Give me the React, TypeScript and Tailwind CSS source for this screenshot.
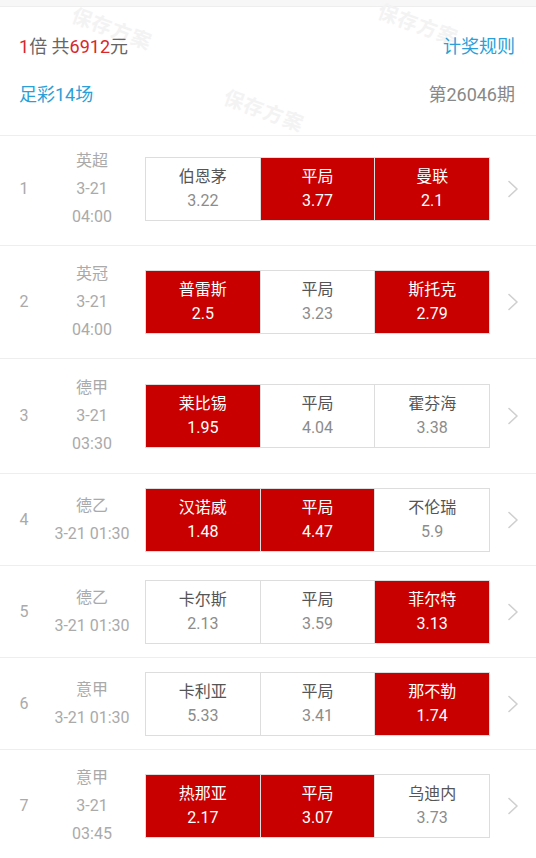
import React from "react";

type Pick = { name: string; odds: string; on: boolean };
type Match = {
  no: number;
  league: string;
  time: string[];
  h: string;
  picks: Pick[];
};

const matches: Match[] = [
  {
    no: 1,
    league: "英超",
    time: ["3-21", "04:00"],
    h: "h-[110px] pb-[3px]",
    picks: [
      { name: "伯恩茅", odds: "3.22", on: false },
      { name: "平局", odds: "3.77", on: true },
      { name: "曼联", odds: "2.1", on: true },
    ],
  },
  {
    no: 2,
    league: "英冠",
    time: ["3-21", "04:00"],
    h: "h-[113px]",
    picks: [
      { name: "普雷斯", odds: "2.5", on: true },
      { name: "平局", odds: "3.23", on: false },
      { name: "斯托克", odds: "2.79", on: true },
    ],
  },
  {
    no: 3,
    league: "德甲",
    time: ["3-21", "03:30"],
    h: "h-[115px]",
    picks: [
      { name: "莱比锡", odds: "1.95", on: true },
      { name: "平局", odds: "4.04", on: false },
      { name: "霍芬海", odds: "3.38", on: false },
    ],
  },
  {
    no: 4,
    league: "德乙",
    time: ["3-21 01:30"],
    h: "h-[92px]",
    picks: [
      { name: "汉诺威", odds: "1.48", on: true },
      { name: "平局", odds: "4.47", on: true },
      { name: "不伦瑞", odds: "5.9", on: false },
    ],
  },
  {
    no: 5,
    league: "德乙",
    time: ["3-21 01:30"],
    h: "h-[92px]",
    picks: [
      { name: "卡尔斯", odds: "2.13", on: false },
      { name: "平局", odds: "3.59", on: false },
      { name: "菲尔特", odds: "3.13", on: true },
    ],
  },
  {
    no: 6,
    league: "意甲",
    time: ["3-21 01:30"],
    h: "h-[92px]",
    picks: [
      { name: "卡利亚", odds: "5.33", on: false },
      { name: "平局", odds: "3.41", on: false },
      { name: "那不勒", odds: "1.74", on: true },
    ],
  },
  {
    no: 7,
    league: "意甲",
    time: ["3-21", "03:45"],
    h: "h-[113px]",
    picks: [
      { name: "热那亚", odds: "2.17", on: true },
      { name: "平局", odds: "3.07", on: true },
      { name: "乌迪内", odds: "3.73", on: false },
    ],
  },
];

function Chevron() {
  return (
    <svg width="12" height="18" viewBox="0 0 12 18" fill="none">
      <path d="M2 1.5 L10 9 L2 16.5" stroke="#cfcfcf" strokeWidth="1.6" strokeLinecap="round" strokeLinejoin="round" />
    </svg>
  );
}

// faint rotated "保存方案" stamps behind the header
function Watermark({ className }: { className: string }) {
  return (
    <span
      className={`pointer-events-none absolute rotate-[20deg] text-[20px] font-bold tracking-[1px] text-[#f3f3f3] ${className}`}
    >
      保存方案
    </span>
  );
}

function Row({ m }: { m: Match }) {
  return (
    <div className={`flex items-center border-b border-[#eeeeee] ${m.h}`}>
      <div className="w-[48px] text-center text-[16px] text-[#aaaaaa]">{m.no}</div>
      <div className="flex w-[88px] flex-col items-center text-[16px] leading-[28px] text-[#aaaaaa]">
        <span>{m.league}</span>
        {m.time.map((t) => (
          <span key={t} className="whitespace-nowrap">
            {t}
          </span>
        ))}
      </div>
      <div className="ml-[9px] flex h-[64px] w-[345px] divide-x divide-[#dddddd] border border-[#dddddd]">
        {m.picks.map((p, i) => (
          <div
            key={i}
            className={`flex flex-1 flex-col items-center justify-center text-[16px] leading-[24px] ${
              p.on ? "bg-[#c80000] text-white" : "bg-white"
            }`}
          >
            <span className={p.on ? "" : "text-[#555555]"}>{p.name}</span>
            <span className={p.on ? "" : "text-[#8c8c8c]"}>{p.odds}</span>
          </div>
        ))}
      </div>
      <div className="ml-[17px] flex items-center">
        <Chevron />
      </div>
    </div>
  );
}

export default function App() {
  return (
    <div
      className="min-h-[858px] w-[536px] overflow-hidden bg-white"
      style={{ fontFamily: '"Roboto", "Noto Sans CJK SC", "Noto Sans", sans-serif' }}
    >
      <div className="h-[7px] border-b border-[#eeeeee] bg-[#f7f7f7]" />
      <div className="relative flex flex-col gap-[24px] border-b border-[#eeeeee] px-[19px] pb-[28px] pt-[28px] text-[18px] leading-[24px]">
        <Watermark className="left-[70px] top-[10px]" />
        <Watermark className="left-[376px] top-[6px]" />
        <Watermark className="left-[222px] top-[92px]" />
        <div className="relative flex items-center justify-between">
          <span className="text-[#666666]">
            <span className="text-[#d7282c]">1</span>倍 共<span className="text-[#d7282c]">6912</span>元
          </span>
          <span className="pr-[2px] text-[#2b9fd8]">计奖规则</span>
        </div>
        <div className="relative flex items-center justify-between">
          <span className="text-[#2b9fd8]">足彩14场</span>
          <span className="pr-[2px] text-[#888888]">第26046期</span>
        </div>
      </div>
      {matches.map((m) => (
        <Row key={m.no} m={m} />
      ))}
    </div>
  );
}
